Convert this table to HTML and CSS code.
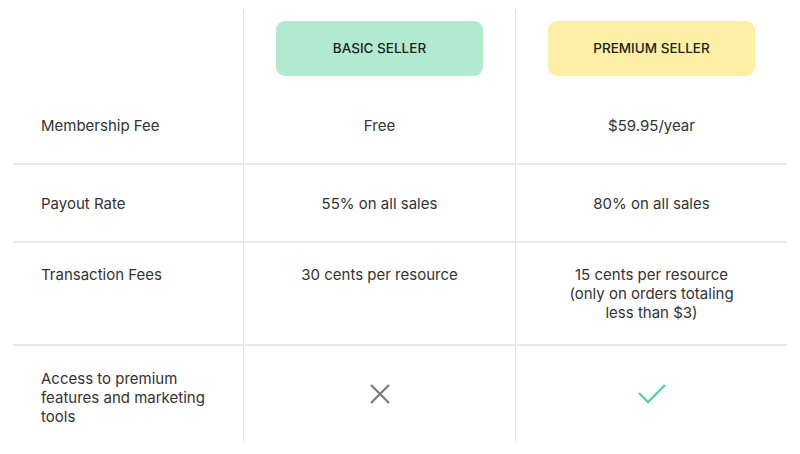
FILE: index.html
```html
<!DOCTYPE html>
<html>
<head>
<meta charset="utf-8">
<link rel="stylesheet" href="styles.css">
</head>
<body>
<div class="table">
  <div class="cell head-label"></div>
  <div class="cell col head"><div class="pill basic">BASIC SELLER</div></div>
  <div class="cell col head"><div class="pill premium">PREMIUM SELLER</div></div>

  <div class="cell label">Membership Fee</div>
  <div class="cell col value">Free</div>
  <div class="cell col value">$59.95/year</div>

  <div class="cell label line">Payout Rate</div>
  <div class="cell col value line">55% on all sales</div>
  <div class="cell col value line">80% on all sales</div>

  <div class="cell label line top">Transaction Fees</div>
  <div class="cell col value line top">30 cents per resource</div>
  <div class="cell col value line top">15 cents per resource<br>(only on orders totaling<br>less than $3)</div>

  <div class="cell label line last">Access to premium<br>features and marketing<br>tools</div>
  <div class="cell col value line last">
    <svg class="icon" width="22" height="22" viewBox="0 0 22 22"><path d="M2 2 L20 20 M20 2 L2 20" stroke="#7a7a7a" stroke-width="2.2" fill="none"/></svg>
  </div>
  <div class="cell col value line last">
    <svg class="icon" width="30" height="22" viewBox="0 0 30 22"><path d="M2 10 L11 19 L28 2" stroke="#5fcf99" stroke-width="2.4" fill="none"/></svg>
  </div>
</div>
</body>
</html>
```
FILE: styles.css
```css
html, body {
  margin: 0;
  padding: 0;
  background: #ffffff;
}
body {
  font-family: "Inter", "Liberation Sans", sans-serif;
  color: #333333;
  font-size: 15px;
  padding: 10px 13px 0 13px;
}
.table {
  display: grid;
  grid-template-columns: 230px 272px 272px;
  grid-template-rows: 78px 75px 78px 103px 97px;
}
.cell {
  display: flex;
  align-items: center;
  line-height: 19px;
}
.col {
  border-left: 1px solid #e3e3e3;
  justify-content: center;
  text-align: center;
}
.line {
  border-top: 2px solid #e8e8e8;
}
.label {
  padding-left: 28px;
}
.top {
  align-items: flex-start;
  padding-top: 22px;
}
.head {
  align-items: flex-start;
  padding-top: 11px;
}
.pill {
  width: 207px;
  height: 55px;
  border-radius: 9px;
  display: flex;
  align-items: center;
  justify-content: center;
  font-size: 13.5px;
  font-weight: 500;
  color: #222;
}
.basic { background: #b2ead0; }
.premium { background: #fdf0a6; }
.last.label { padding-top: 8px; }
```
